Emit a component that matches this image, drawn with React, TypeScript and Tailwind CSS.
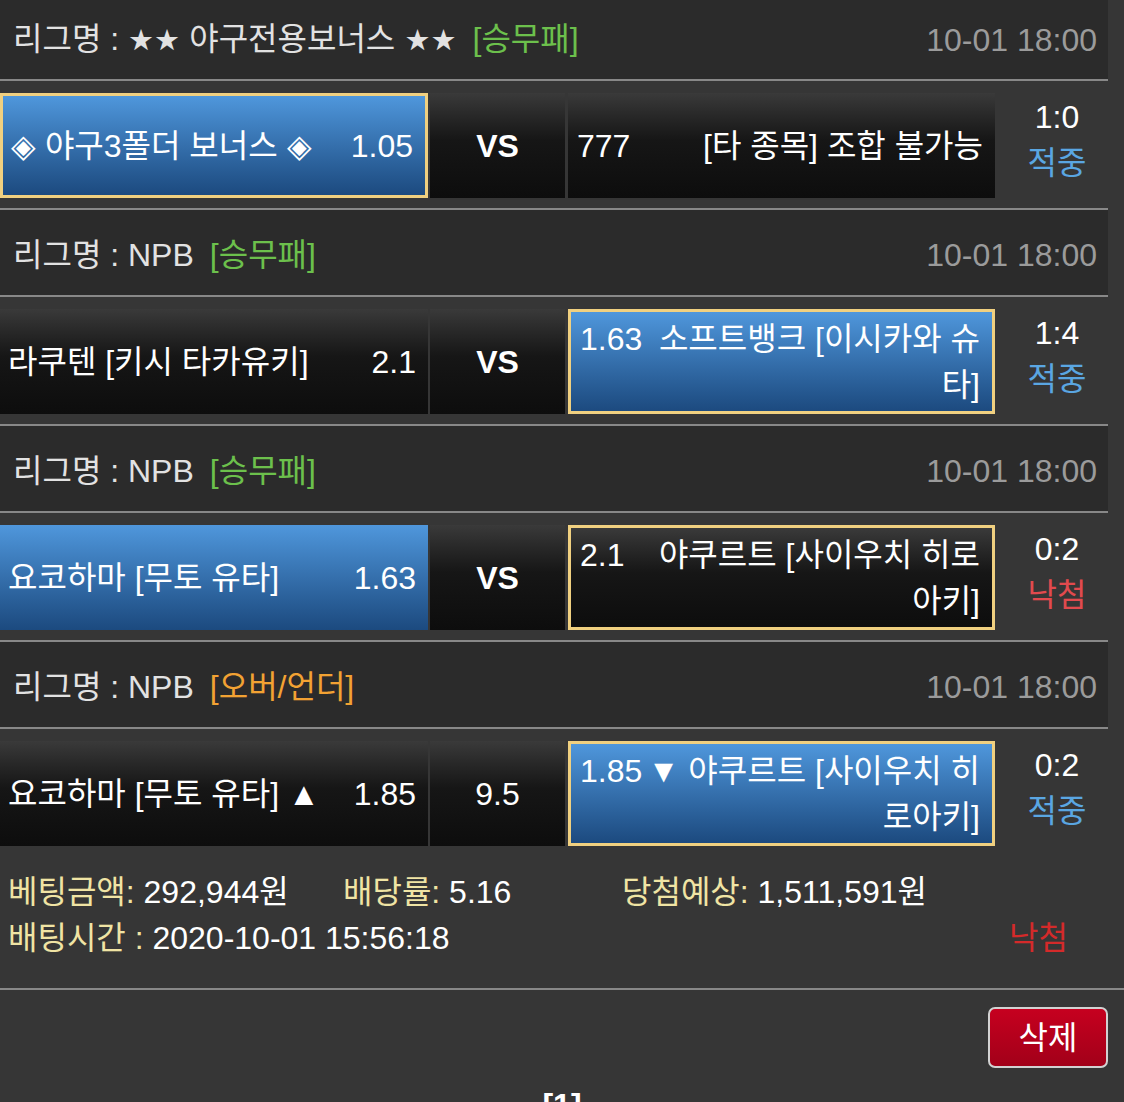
import React from 'react';

interface Lado {
  texto: string[];
  odd: string;
  azul?: boolean;
  escolha?: boolean;
}

interface Jogo {
  estrelas?: boolean;
  liga: string;
  tipo: string;
  tipoCor: string;
  hora: string;
  casa: Lado;
  meio: string;
  meioBold?: boolean;
  fora: Lado;
  placar: string;
  resultado: string;
  resultadoCor: string;
}

const jogos: Jogo[] = [
  {
    estrelas: true,
    liga: '야구전용보너스',
    tipo: '[승무패]',
    tipoCor: 'text-[#6cc04c]',
    hora: '10-01 18:00',
    casa: { texto: ['◈ 야구3폴더 보너스 ◈'], odd: '1.05', azul: true, escolha: true },
    meio: 'VS',
    meioBold: true,
    fora: { texto: ['[타 종목] 조합 불가능'], odd: '777' },
    placar: '1:0',
    resultado: '적중',
    resultadoCor: 'text-[#5aa6e2]',
  },
  {
    liga: 'NPB',
    tipo: '[승무패]',
    tipoCor: 'text-[#6cc04c]',
    hora: '10-01 18:00',
    casa: { texto: ['라쿠텐 [키시 타카유키]'], odd: '2.1' },
    meio: 'VS',
    meioBold: true,
    fora: { texto: ['소프트뱅크 [이시카와 슈', '타]'], odd: '1.63', azul: true, escolha: true },
    placar: '1:4',
    resultado: '적중',
    resultadoCor: 'text-[#5aa6e2]',
  },
  {
    liga: 'NPB',
    tipo: '[승무패]',
    tipoCor: 'text-[#6cc04c]',
    hora: '10-01 18:00',
    casa: { texto: ['요코하마 [무토 유타]'], odd: '1.63', azul: true },
    meio: 'VS',
    meioBold: true,
    fora: { texto: ['야쿠르트 [사이우치 히로', '아키]'], odd: '2.1', escolha: true },
    placar: '0:2',
    resultado: '낙첨',
    resultadoCor: 'text-[#e24a4e]',
  },
  {
    liga: 'NPB',
    tipo: '[오버/언더]',
    tipoCor: 'text-[#f2a233]',
    hora: '10-01 18:00',
    casa: { texto: ['요코하마 [무토 유타] ▲'], odd: '1.85' },
    meio: '9.5',
    fora: { texto: ['▼ 야쿠르트 [사이우치 히', '로아키]'], odd: '1.85', azul: true, escolha: true },
    placar: '0:2',
    resultado: '적중',
    resultadoCor: 'text-[#5aa6e2]',
  },
];

const celula = (lado: Lado) =>
  `${lado.azul
    ? 'bg-linear-to-b from-[#4f97dc] to-[#1c4a7f]'
    : 'bg-linear-to-b from-[#3a3a3a] via-[#161616] via-45% to-[#0d0d0d]'
  } ${lado.escolha ? 'border-[3px] border-[#f0d080]' : ''}`;

const escuro = 'bg-linear-to-b from-[#3a3a3a] via-[#161616] via-45% to-[#0d0d0d]';

const Cabecalho = ({ jogo, primeiro }: { jogo: Jogo; primeiro: boolean }) => (
  <div
    className={`flex items-center justify-between bg-[#2b2b2b] pl-[13px] pr-[11px] border-[#888] ${primeiro ? 'h-[81px] border-b-2' : 'h-[89px] border-y-2 pt-[5px]'
      }`}
  >
    <div className='text-[#e2e2e2] whitespace-nowrap'>
      리그명 :{' '}
      {jogo.estrelas && <span className="font-['DejaVu_Sans'] text-[29px]">★★ </span>}
      {jogo.liga}
      {jogo.estrelas && <span className="font-['DejaVu_Sans'] text-[29px]"> ★★</span>}
      <span className={`ml-[16px] ${jogo.tipoCor}`}>{jogo.tipo}</span>
    </div>
    <div className='text-[#9b9b9b]'>{jogo.hora}</div>
  </div>
);

const Partida = ({ jogo }: { jogo: Jogo }) => (
  <div className='flex h-[105px]'>
    <div className={`w-[428px] h-full flex items-center justify-between pl-2 pr-3 ${celula(jogo.casa)}`}>
      <span className='whitespace-nowrap'>{jogo.casa.texto[0]}</span>
      <span>{jogo.casa.odd}</span>
    </div>
    <div
      className={`ml-[2px] w-[135px] h-full flex items-center justify-center ${escuro} ${jogo.meioBold ? 'font-bold' : ''
        }`}
    >
      {jogo.meio}
    </div>
    <div className={`ml-[3px] w-[427px] h-full flex items-center pl-[9px] pr-3 ${celula(jogo.fora)}`}>
      <div className='flex w-full items-baseline'>
        <span className='shrink-0'>{jogo.fora.odd}</span>
        <div className='flex-1 text-right'>
          {jogo.fora.texto.map((linha, i) => (
            <div key={i} className='whitespace-nowrap'>
              {linha}
            </div>
          ))}
        </div>
      </div>
    </div>
    <div className='w-[113px] h-full flex flex-col items-center justify-center pl-[11px] pb-[12px]'>
      <span>{jogo.placar}</span>
      <span className={jogo.resultadoCor}>{jogo.resultado}</span>
    </div>
  </div>
);

export default function App() {
  return (
    <div className="min-h-screen bg-[#363636] text-white text-[32px] leading-[46px] font-['Liberation_Sans','Noto_Sans_CJK_KR',sans-serif]">
      <div className='w-[1108px]'>
        {jogos.map((jogo, i) => (
          <div key={i}>
            <Cabecalho jogo={jogo} primeiro={i === 0} />
            <div className='pt-[12px] pb-[10px]'>
              <Partida jogo={jogo} />
            </div>
          </div>
        ))}
      </div>

      <div className='pt-[13px] pb-[27px] pl-2 border-b-2 border-[#888]'>
        <div className='flex whitespace-nowrap'>
          <span className='w-[335px]'>
            <span className='text-[#f0e4a4]'>베팅금액:</span> 292,944원
          </span>
          <span className='w-[279px]'>
            <span className='text-[#f0e4a4]'>배당률:</span> 5.16
          </span>
          <span>
            <span className='text-[#f0e4a4]'>당첨예상:</span> 1,511,591원
          </span>
        </div>
        <div className='flex justify-between pr-[56px] whitespace-nowrap'>
          <span>
            <span className='text-[#f0e4a4]'>배팅시간 :</span> 2020-10-01 15:56:18
          </span>
          <span className='text-[#d42a2a]'>낙첨</span>
        </div>
      </div>

      <div className='flex justify-end pt-[17px] pr-[16px]'>
        <button className='w-[120px] h-[61px] rounded-[7px] border-2 border-[#d2d2d2] bg-linear-to-b from-[#c6001f] to-[#a20019] text-white'>
          삭제
        </button>
      </div>

      <div className='mt-[14px] text-center font-bold'>[1]</div>
    </div>
  );
}
